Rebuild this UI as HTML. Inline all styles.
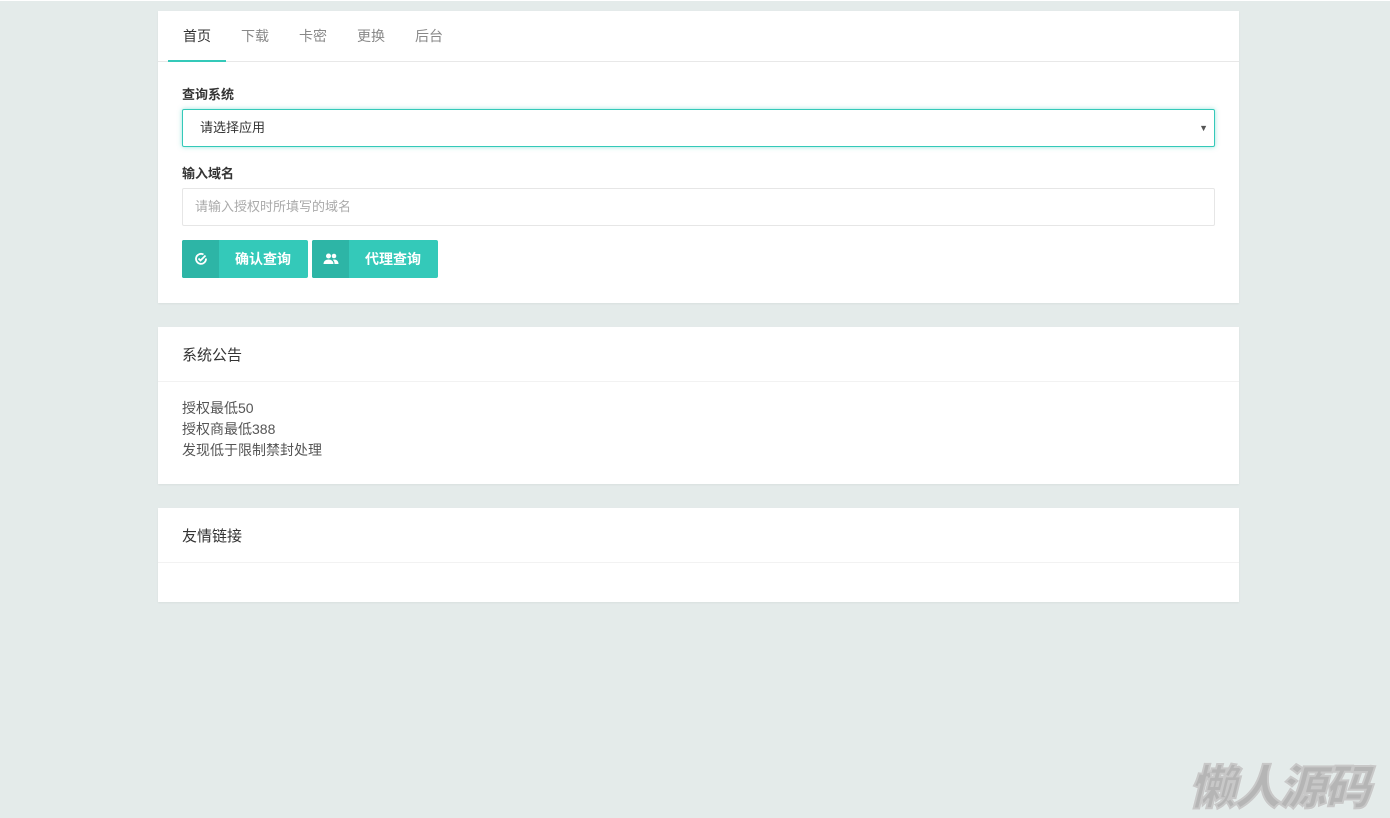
<!DOCTYPE html>
<html><head><meta charset="utf-8"><style>
*{box-sizing:border-box;margin:0;padding:0}
body{width:1390px;height:817px;background:#e4ebea;font-family:"Liberation Sans","Noto Sans CJK SC",sans-serif;font-size:14px;color:#333;position:relative;overflow:hidden;border-top:1px solid #fff}
.card{position:absolute;left:158px;width:1081px;background:#fff;box-shadow:0 1px 2px rgba(0,0,0,.05)}
.tabs{height:51px;border-bottom:1px solid #e8e8e8;position:relative}
.tab{position:absolute;top:15px;font-size:14px;color:#888}
.tab.on{color:#333}
.ul{position:absolute;left:10px;top:49px;width:58px;height:2px;background:#34c9b9}
.lbl{position:absolute;left:24px;font-weight:bold;font-size:13px;color:#333}
.inp{position:absolute;left:24px;width:1033px;height:38px;border:1px solid #e6e6e6;border-radius:2px;font-size:13px;padding-left:12px;line-height:36px;color:#aaa}
.sel{border-color:#34c9b9;box-shadow:0 0 5px rgba(52,201,185,.5);color:#333;padding-left:17px}
.btn{position:absolute;top:229px;width:126px;height:38px;background:#34c9b9;border-radius:2px;color:#fff;font-weight:bold;font-size:14px}
.btn .ic{position:absolute;left:0;top:0;width:37px;height:38px;background:#2db5a6;border-radius:2px 0 0 2px;display:flex;align-items:center;justify-content:center}
.btn .t{position:absolute;left:53px;top:9px}
.hd{height:55px;border-bottom:1px solid #f2f2f2;padding:17px 24px;font-size:15px;color:#333}
.bd{padding:16px 24px;font-size:14px;line-height:21px;color:#555}
.wm{position:absolute;left:1189px;top:748px;font-size:47px;font-weight:900;font-style:italic;color:#b5b5b5;font-family:"Noto Sans CJK SC",sans-serif;letter-spacing:-2px;-webkit-text-stroke:2px #c8c8c8;text-shadow:0 0 2px #fff}
</style></head><body>
<div class="card" style="top:10px;height:292px">
 <div class="tabs">
  <span class="tab on" style="left:25px">首页</span>
  <span class="tab" style="left:83px">下载</span>
  <span class="tab" style="left:141px">卡密</span>
  <span class="tab" style="left:199px">更换</span>
  <span class="tab" style="left:257px">后台</span>
  <div class="ul"></div>
 </div>
 <div class="lbl" style="top:73px">查询系统</div>
 <div class="inp sel" style="top:98px">请选择应用<span style="position:absolute;right:6px;top:0;font-size:9px;color:#555">▼</span></div>
 <div class="lbl" style="top:152px">输入域名</div>
 <div class="inp" style="top:177px">请输入授权时所填写的域名</div>
 <div class="btn" style="left:24px"><div class="ic"><svg width="14" height="14" viewBox="0 0 14 14" fill="none" stroke="#fff" stroke-width="1.8"><path d="M12 6.5A5 5 0 1 1 9.5 2.5"/><path d="M4.5 6.5l2 2 5-5"/></svg></div><span class="t">确认查询</span></div>
 <div class="btn" style="left:154px"><div class="ic"><svg width="16" height="12" viewBox="0 0 16 12" fill="#fff"><circle cx="5.5" cy="3" r="2.5"/><circle cx="11" cy="3" r="2.3"/><path d="M0.5 11c0-3 2.5-4.5 5-4.5s5 1.5 5 4.5z"/><path d="M11 6.5c2.5 0 4.5 1.5 4.5 4.5h-4c0-2-0.5-3.3-1.8-4.3z"/></svg></div><span class="t">代理查询</span></div>
</div>
<div class="card" style="top:326px;height:157px">
 <div class="hd">系统公告</div>
 <div class="bd">授权最低50<br>授权商最低388<br>发现低于限制禁封处理</div>
</div>
<div class="card" style="top:507px;height:94px">
 <div class="hd">友情链接</div>
</div>
<div class="wm">懒人源码</div>
</body></html>
